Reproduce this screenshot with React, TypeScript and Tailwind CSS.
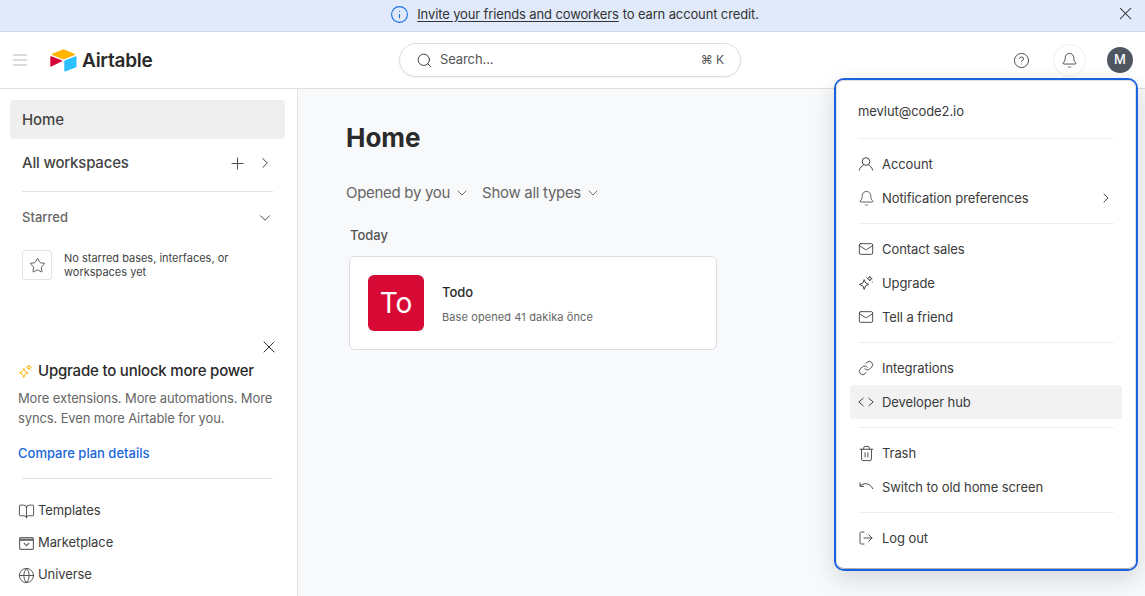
import { Bell, BookOpen, ChevronDown, ChevronRight, CircleHelp, Globe, Info, Link, LogOut, Mail, Plus, Search, Star, Trash2, X } from 'lucide-react';
import type { ReactNode } from 'react';

function Sparkle({ className }: { className?: string }) {
  return (
    <svg className={className} viewBox="0 0 16 16" fill="none" stroke="currentColor" strokeWidth="1" strokeLinejoin="round">
      <path d="M6.2 4.6 7.6 8l3.2 1.4-3.2 1.4-1.4 3.6-1.4-3.6L1.4 9.4 4.8 8z" />
      <path d="M11.8 1.2l.7 1.7 1.7.7-1.7.7-.7 1.7-.7-1.7-1.7-.7 1.7-.7z" />
      <circle cx="14.4" cy="7" r=".5" fill="currentColor" stroke="none" />
      <circle cx="8.6" cy="2.4" r=".5" fill="currentColor" stroke="none" />
    </svg>
  );
}

function CodeIcon() {
  return (
    <svg className="h-4 w-4 text-[#444]" viewBox="0 0 16 16" fill="none" stroke="currentColor" strokeWidth="1">
      <path d="M5.5 4 .8 8l4.7 4M10.5 4l4.7 4-4.7 4" />
    </svg>
  );
}

function UserIcon() {
  return (
    <svg className="h-4 w-4 text-[#444]" viewBox="0 0 16 16" fill="none" stroke="currentColor" strokeWidth="1">
      <circle cx="8" cy="5.5" r="3.8" />
      <path d="M1.2 14.5c.8-3 3-5 4.3-5.4M14.8 14.5c-.8-3-3-5-4.3-5.4" />
    </svg>
  );
}

function UndoIcon() {
  return (
    <svg className="h-4 w-4 text-[#444]" viewBox="0 0 16 16" fill="none" stroke="currentColor" strokeWidth="1">
      <path d="M2 3.5v3.8h4" />
      <path d="M2 7.3C5 3.8 11.5 3 15 10" />
    </svg>
  );
}

function Marketplace() {
  return (
    <svg className="h-[17px] w-[17px] text-[#666]" viewBox="0 0 16 16" fill="none" stroke="currentColor" strokeWidth="1.1">
      <rect x="1.5" y="2.5" width="13" height="11" rx="1" />
      <path d="M1.5 4.5h13" strokeWidth="2" />
      <path d="M5.5 7.5 8 10l2.5-2.5" />
    </svg>
  );
}

function Logo() {
  return (
    <svg className="h-[23px] w-[27px]" viewBox="10 8 180 152">
      <path fill="#FFB400" d="M90.04 12.37 24.79 39.37c-3.63 1.5-3.59 6.66.06 8.11l65.52 25.98c5.76 2.28 12.17 2.28 17.92 0l65.52-25.98c3.65-1.45 3.69-6.61.06-8.11L108.63 12.37c-5.96-2.47-12.63-2.47-18.59 0" />
      <path fill="#2DC0FF" d="M105.15 87.65v64.91c0 3.09 3.11 5.2 5.98 4.06l73.01-28.34c1.67-.66 2.76-2.27 2.76-4.06V59.31c0-3.09-3.11-5.2-5.98-4.06l-73 28.34c-1.67.66-2.77 2.27-2.77 4.06" />
      <path fill="#D8003A" d="M88.1 91 66.43 101.46l-2.2 1.06-45.74 21.92c-2.9 1.4-6.6-.71-6.6-3.93V59.6c0-1.17.6-2.17 1.4-2.93.33-.33.71-.6 1.1-.82 1.09-.65 2.64-.82 3.96-.3l69.36 27.48c3.53 1.4 3.8 6.33.39 7.97" />
    </svg>
  );
}

function MenuRow({ icon, label, active, arrow }: { icon: ReactNode; label: string; active?: boolean; arrow?: boolean }) {
  return (
    <div className={`flex h-[34px] items-center gap-2 rounded px-2 text-[13px] tracking-[-0.08px] text-[#3a3a3a] ${active ? 'bg-[#f2f2f2]' : ''}`}>
      {icon}
      <span className="mt-[2px] flex-1">{label}</span>
      {arrow && <ChevronRight size={16} strokeWidth={1.5} className="text-[#444]" />}
    </div>
  );
}

function Divider() {
  return <div className="mx-2 my-2 h-px bg-[#eeeeee]" />;
}

function SideLink({ icon, label }: { icon: ReactNode; label: string }) {
  return (
    <div className="flex h-8 items-center gap-[3px] text-[13px] tracking-[-0.1px] text-[#3a3a3a]">
      {icon}
      <span>{label}</span>
    </div>
  );
}

const menuIcon = 'shrink-0 text-[#444]';

export default function App() {
  return (
    <div className="relative flex h-screen flex-col overflow-hidden bg-white font-['Inter',sans-serif] text-[#333]">
      <div className="relative flex h-8 shrink-0 items-center justify-center border-b border-[#cdd6e6] bg-[#e1eafb] pb-[2px] pl-[4px] text-[13px] tracking-[-0.13px]">
        <Info size={19} strokeWidth={1.4} className="mr-[8px] text-[#1a6fe0]" />
        <span className="underline underline-offset-2">Invite your friends and coworkers</span>
        <span className="ml-1">to earn account credit.</span>
        <X size={21} strokeWidth={1.2} className="absolute right-[9px] top-[3px] text-[#222]" />
      </div>

      <header className="flex h-[57px] shrink-0 items-center border-b border-[#dfdfdf] bg-white pl-3 pr-[12px]">
        <svg className="h-4 w-4 text-[#b5b5b5]" viewBox="0 0 16 16" stroke="currentColor" strokeWidth="1.2">
          <path d="M1 3h14M1 8h14M1 13h14" />
        </svg>
        <div className="ml-[22px] flex w-[349px] items-center gap-[5px]">
          <Logo />
          <span className="pt-[2px] text-[19px] font-semibold tracking-[-0.25px] text-[#2a2a2a]">Airtable</span>
        </div>
        <div className="flex h-[34px] w-[342px] items-center rounded-full border border-[#dddddd] bg-white pl-[16px] pr-4 text-[13px] tracking-[-0.1px] text-[#555] shadow-[0_1px_2px_rgba(0,0,0,0.06)]">
          <Search size={17} strokeWidth={1.3} className="text-[#333]" />
          <span className="ml-[7px] flex-1">Search...</span>
          <span className="text-xs">⌘ K</span>
        </div>
        <div className="ml-auto flex items-center">
          <CircleHelp size={17} strokeWidth={1.2} className="mr-[23px] text-[#333]" />
          <div className="mr-[21px] flex h-[33px] w-[33px] items-center justify-center rounded-full border border-[#f0f0f0]">
            <Bell size={17} strokeWidth={1.2} className="text-[#333]" />
          </div>
          <div className="flex h-[26px] w-[26px] items-center justify-center rounded-full bg-[#4f5561] text-[13px] font-medium text-white">M</div>
        </div>
      </header>

      <div className="flex min-h-0 flex-1">
        <aside className="flex w-[298px] shrink-0 flex-col overflow-hidden border-r border-[#e3e3e3] bg-white">
          <div className="ml-[10px] mr-[12px] mt-[11px] flex h-[39px] items-center rounded bg-[#efefef] pl-3 pt-[2px] text-[15px] font-medium tracking-[-0.1px] text-[#444]">Home</div>
          <div className="ml-[22px] mr-[24px] mt-[8px] flex h-[32px] items-center text-[15px] font-medium tracking-[-0.2px] text-[#444]">
            <span className="flex-1">All workspaces</span>
            <Plus size={19} strokeWidth={1.2} className="mr-[9px]" />
            <ChevronRight size={18} strokeWidth={1.3} className="-mr-[1px]" />
          </div>
          <div className="ml-[22px] mr-[24px] mt-[12px] h-px bg-[#e3e3e3]" />
          <div className="ml-[22px] mr-[24px] mt-[17px] flex h-[18px] items-center text-[13px] font-medium text-[#666]">
            <span className="flex-1">Starred</span>
            <ChevronDown size={18} strokeWidth={1.2} className="-mr-[1px] text-[#333]" />
          </div>
          <div className="mx-[22px] mt-[23px] flex items-center gap-3">
            <div className="flex h-[30px] w-[30px] shrink-0 items-center justify-center rounded-[3px] border border-[#e3e3e3]">
              <Star size={17} strokeWidth={1.1} className="text-[#333]" />
            </div>
            <p className="text-[11px] leading-[14px] text-[#444]">No starred bases, interfaces, or<br />workspaces yet</p>
          </div>

          <div className="mr-[18px] mt-[57px] flex justify-end">
            <X size={20} strokeWidth={1.1} className="text-[#222]" />
          </div>
          <div className="ml-[18px] mt-[4px] flex h-5 items-center gap-[5px]">
            <Sparkle className="h-[15px] w-[15px] text-[#fcb400]" />
            <span className="text-[15px] font-medium tracking-[-0.2px] text-[#2a2a2a]">Upgrade to unlock more power</span>
          </div>
          <p className="ml-[18px] mt-[7px] text-[13px] leading-5 tracking-[-0.13px] text-[#666]">More extensions. More automations. More<br />syncs. Even more Airtable for you.</p>
          <div className="ml-[18px] mt-[15px] text-[13px] font-medium leading-5 text-[#1a66db]">Compare plan details</div>
          <div className="ml-[22px] mr-[24px] mt-[15px] h-px bg-[#e3e3e3]" />
          <div className="ml-[18px] mt-[16px] flex flex-col">
            <SideLink icon={<BookOpen size={17} strokeWidth={1.2} />} label="Templates" />
            <SideLink icon={<Marketplace />} label="Marketplace" />
            <SideLink icon={<Globe size={17} strokeWidth={1.2} />} label="Universe" />
          </div>
        </aside>

        <main className="flex-1 bg-[#f8f9fb] pl-[48px]">
          <h1 className="mt-[31px] text-[26px] font-bold leading-[36px] text-[#2a2a2a]">Home</h1>
          <div className="mt-[27px] flex h-5 items-center text-[15px] tracking-[-0.3px] text-[#666]">
            <span>Opened by you</span>
            <ChevronDown size={16} strokeWidth={1.4} className="ml-[4px]" />
            <span className="ml-[12px]">Show all types</span>
            <ChevronDown size={16} strokeWidth={1.4} className="ml-[4px]" />
          </div>
          <div className="ml-1 mt-[22px] text-[13px] font-medium leading-5 text-[#555]">Today</div>
          <div className="ml-[3px] mt-[11px] flex h-[94px] w-[368px] items-center rounded-md border border-[#dcdde3] bg-white pl-[18px]">
            <div className="flex h-14 w-14 items-center justify-center rounded-md bg-[#d70a35] text-[28px] text-white">To</div>
            <div className="ml-[18px] pt-[2px]">
              <div className="text-[13px] font-medium leading-5 text-[#2a2a2a]">Todo</div>
              <div className="mt-[5px] text-[11px] leading-5 tracking-[0.1px] text-[#666]">Base opened 41 dakika önce</div>
            </div>
          </div>
        </main>
      </div>

      {/* account dropdown sits over the page */}
      <div className="absolute right-[7px] top-[78px] h-[493px] w-[304px] rounded-[10px] border-2 border-[#1b61e0] shadow-[0_8px_24px_rgba(0,0,0,0.14)]">
        <div className="h-full rounded-lg border border-[#dedede] border-b-[#b0b0b0] bg-white px-[13px] pt-[17px]">
          <div className="flex h-[28px] items-center px-2 text-[13px] tracking-[-0.08px] text-[#3a3a3a]">mevlut@code2.io</div>
          <div className="mx-2 mb-2 mt-[12px] h-px bg-[#eeeeee]" />
          <MenuRow icon={<UserIcon />} label="Account" />
          <MenuRow icon={<Bell size={17} strokeWidth={1.2} className={`-mr-[1px] ${menuIcon}`} />} label="Notification preferences" arrow />
          <Divider />
          <MenuRow icon={<Mail size={16} strokeWidth={1.4} className={menuIcon} />} label="Contact sales" />
          <MenuRow icon={<Sparkle className={`h-4 w-4 ${menuIcon}`} />} label="Upgrade" />
          <MenuRow icon={<Mail size={16} strokeWidth={1.4} className={menuIcon} />} label="Tell a friend" />
          <Divider />
          <MenuRow icon={<Link size={16} strokeWidth={1.4} className={menuIcon} />} label="Integrations" />
          <MenuRow icon={<CodeIcon />} label="Developer hub" active />
          <Divider />
          <MenuRow icon={<Trash2 size={17} strokeWidth={1.3} className={`-mr-[1px] ${menuIcon}`} />} label="Trash" />
          <MenuRow icon={<UndoIcon />} label="Switch to old home screen" />
          <Divider />
          <MenuRow icon={<LogOut size={16} strokeWidth={1.4} className={menuIcon} />} label="Log out" />
        </div>
      </div>
    </div>
  );
}
